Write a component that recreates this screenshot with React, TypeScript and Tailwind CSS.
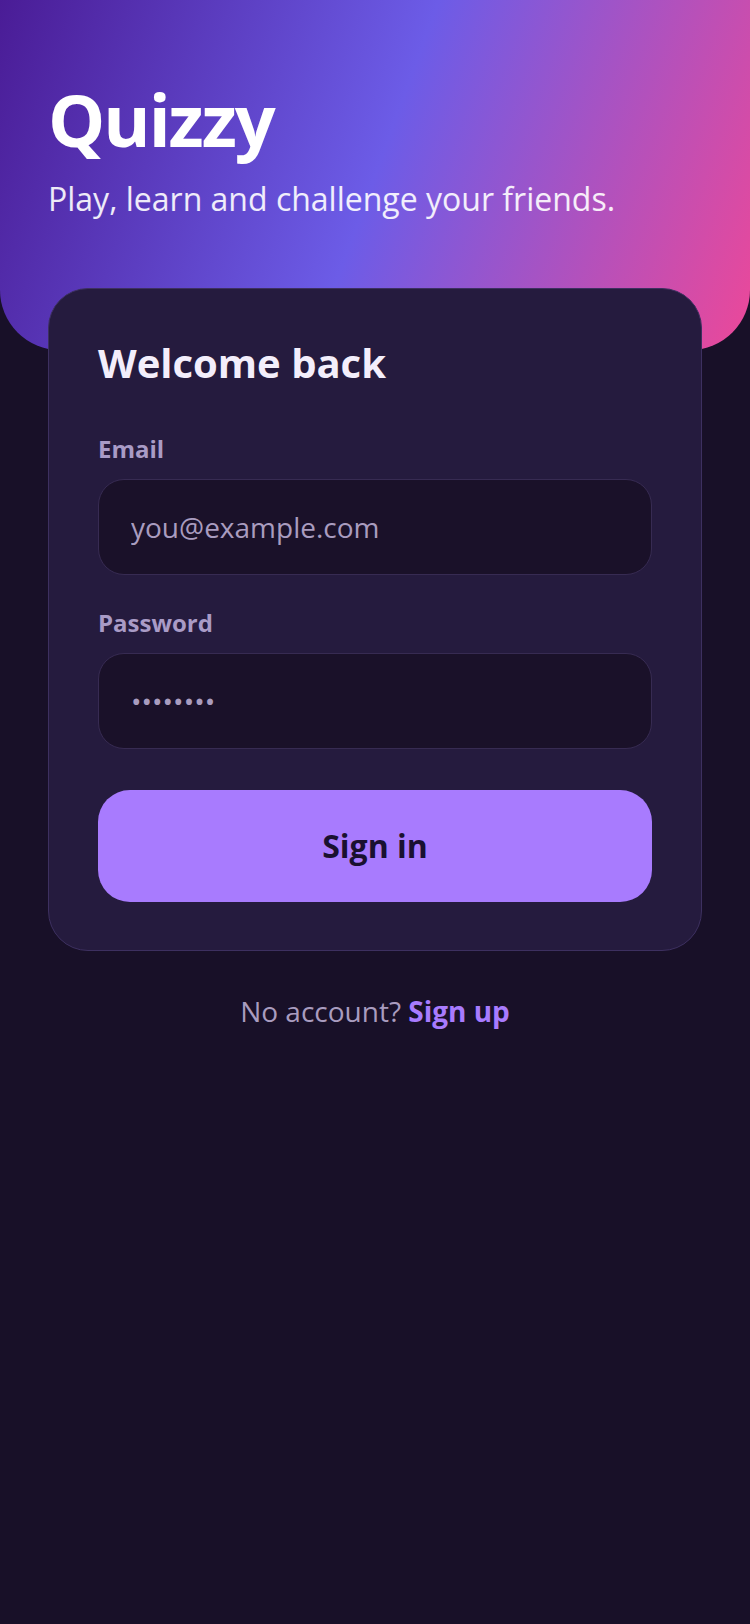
export default function App() {
  return (
    <div
      className="min-h-[1624px] w-full bg-[#181028]"
      style={{ fontFamily: '"Open Sans", "Noto Sans", sans-serif' }}
    >
      <header className="h-[350px] w-full rounded-b-[60px] bg-[linear-gradient(110deg,#4a1c96_0%,#6c5ce7_50%,#ec4899_100%)] px-12 pt-[83px]">
        <h1 className="text-[72px] font-bold leading-none tracking-[-2px] text-white">
          Quizzy
        </h1>
        <p className="mt-6 text-[32px] leading-10 text-white/90">
          Play, learn and challenge your friends.
        </p>
      </header>

      <div className="relative mx-12 -mt-[62px] rounded-[40px] border border-[#3d3060] bg-[#251b3e] px-[49px] pb-12 pt-[50px]">
        <h2 className="text-[40px] font-bold leading-[48px] text-[#f3eefb]">
          Welcome back
        </h2>

        <form className="mt-[46px] flex flex-col" onSubmit={(e) => e.preventDefault()}>
          <label className="text-[24px] font-bold leading-8 text-[#a99bc6]">Email</label>
          <input
            type="email"
            placeholder="you@example.com"
            className="mt-[14px] h-[96px] w-full rounded-[26px] border border-[#372b52] bg-[#1a1129] px-8 text-[28px] text-[#f3eefb] outline-none placeholder:text-[#a99cbf]"
          />

          <label className="mt-8 text-[24px] font-bold leading-8 text-[#a99bc6]">Password</label>
          <input
            type="password"
            placeholder="••••••••"
            className="mt-[14px] h-[96px] w-full rounded-[26px] border border-[#372b52] bg-[#1a1129] px-8 text-[28px] text-[#f3eefb] outline-none placeholder:text-[#a99cbf]"
          />

          <button
            type="submit"
            className="mt-[41px] h-[112px] w-full rounded-[32px] bg-[#a87bfe] text-[32px] font-bold text-[#1a1030]"
          >
            Sign in
          </button>
        </form>
      </div>

      <p className="mt-10 text-center text-[28px] leading-10 text-[#a99cbf]">
        No account? <a href="#" className="font-bold text-[#a87bfe]">Sign up</a>
      </p>
    </div>
  );
}
